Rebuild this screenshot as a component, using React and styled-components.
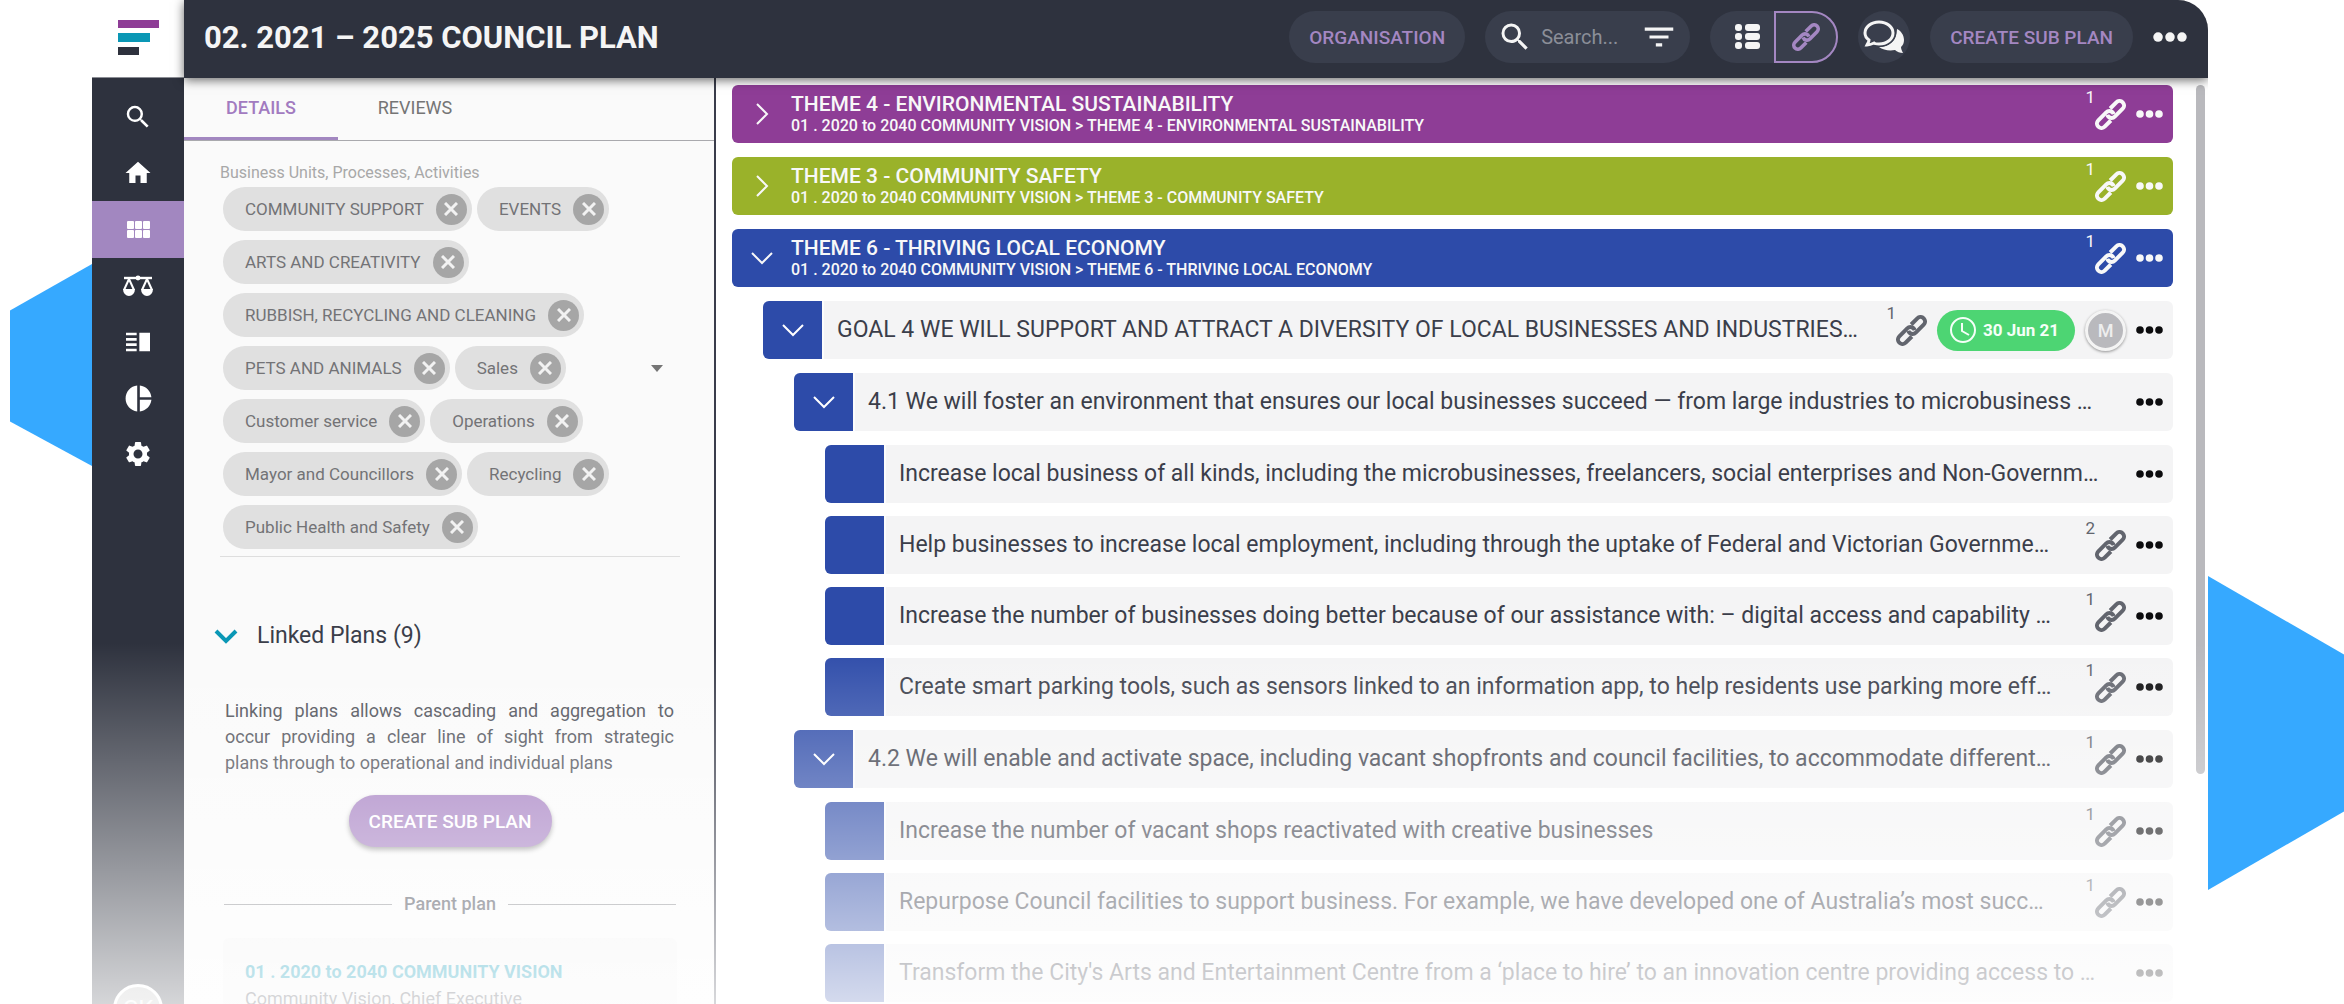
import { useState } from "react";
import styled, { createGlobalStyle, css } from "styled-components";
import {
    MdSearch,
    MdHome,
    MdVerticalSplit,
    MdPieChart,
    MdSettings,
    MdFilterList,
} from "react-icons/md";

const navItems = [
    { label: "Search", icon: <MdSearch size={30} /> },
    { label: "Home", icon: <MdHome size={30} /> },
    { label: "Plans", icon: <GridIcon />, active: true },
    { label: "Balance", icon: <ScalesIcon /> },
    { label: "Reports", icon: <MdVerticalSplit size={32} /> },
    { label: "Analytics", icon: <MdPieChart size={31} /> },
    { label: "Settings", icon: <MdSettings size={30} /> },
];

const businessUnits = [
    "COMMUNITY SUPPORT",
    "EVENTS",
    "ARTS AND CREATIVITY",
    "RUBBISH, RECYCLING AND CLEANING",
    "PETS AND ANIMALS",
    "Sales",
    "Customer service",
    "Operations",
    "Mayor and Councillors",
    "Recycling",
    "Public Health and Safety",
];

const themes = [
    { name: "THEME 4 - ENVIRONMENTAL SUSTAINABILITY", color: "#8e3d96" },
    { name: "THEME 3 - COMMUNITY SAFETY", color: "#9ab22a" },
    { name: "THEME 6 - THRIVING LOCAL ECONOMY", color: "#2d4ba9", open: true },
];

const strategies = [
    {
        name: "4.1 We will foster an environment that ensures our local businesses succeed — from large industries to microbusiness …",
        actions: [
            { name: "Increase local business of all kinds, including the microbusinesses, freelancers, social enterprises and Non-Governm…" },
            { name: "Help businesses to increase local employment, including through the uptake of Federal and Victorian Governme…", links: 2 },
            { name: "Increase the number of businesses doing better because of our assistance with: – digital access and capability …", links: 1 },
            { name: "Create smart parking tools, such as sensors linked to an information app, to help residents use parking more eff…", links: 1 },
        ],
    },
    {
        name: "4.2 We will enable and activate space, including vacant shopfronts and council facilities, to accommodate different…",
        links: 1,
        actions: [
            { name: "Increase the number of vacant shops reactivated with creative businesses", links: 1 },
            { name: "Repurpose Council facilities to support business. For example, we have developed one of Australia’s most succ…", links: 1 },
            { name: "Transform the City's Arts and Entertainment Centre from a ‘place to hire’ to an innovation centre providing access to …" },
        ],
    },
];

function GridIcon() {
    return (
        <svg width="23" height="18" viewBox="0 0 23 18" fill="currentColor">
            {[0, 8, 16].map((x) => (
                <g key={x}>
                    <rect x={x} y="0" width="7" height="8" rx="1" />
                    <rect x={x} y="9" width="7" height="8" rx="1" />
                </g>
            ))}
        </svg>
    );
}

function ScalesIcon() {
    return (
        <svg width="32" height="22" viewBox="0 0 32 22" fill="none" stroke="currentColor" strokeWidth="2">
            <path d="M2 3h28" strokeWidth="2.4" />
            <circle cx="16" cy="3" r="2.4" fill="currentColor" stroke="none" />
            <path d="M7 4L2 15M7 4l5 11M25 4l-5 11M25 4l5 11" />
            <path d="M1 14h12a6 7 0 0 1-12 0zM19 14h12a6 7 0 0 1-12 0z" fill="currentColor" stroke="none" />
        </svg>
    );
}

function ChainIcon({ size = 31 }) {
    const ring = "M-4 4.5H-12.75a4.5 4.5 0 0 1 0-9H-1.5a4.5 4.5 0 0 1 4 6.5";
    return (
        <svg width={size} height={size} viewBox="0 0 31 31" fill="none" stroke="currentColor" strokeWidth="4">
            <g transform="translate(15.5 15.5) rotate(-45)">
                <path d={ring} />
                <path d={ring} transform="rotate(180)" />
            </g>
        </svg>
    );
}

function Chevron({ open, size = 24, width = 2 }) {
    return (
        <svg width={size} height={size} viewBox="0 0 24 24" fill="none" stroke="currentColor" strokeWidth={width}>
            <path d={open ? "M2 7l10 10L22 7" : "M7 2l10 10L7 22"} />
        </svg>
    );
}

function Dots({ width = 27 }) {
    return (
        <svg width={width} viewBox="0 0 27 8" fill="currentColor">
            <circle cx="4" cy="4" r="3.8" />
            <circle cx="13.5" cy="4" r="3.8" />
            <circle cx="23" cy="4" r="3.8" />
        </svg>
    );
}

function ListIcon() {
    return (
        <svg width="26" height="26" viewBox="0 0 26 26" fill="currentColor">
            {[0, 9, 18].map((y) => (
                <g key={y}>
                    <rect x="0" y={y} width="7" height="7" rx="3" />
                    <rect x="10" y={y} width="15" height="7" rx="3" />
                </g>
            ))}
        </svg>
    );
}

function ChatIcon() {
    const bubble =
        "M16 2c8 0 14 5 14 11s-6 11-14 11c-2 0-4 0-5-1-2 1-4 2-7 2 1-2 2-3 2-5-3-2-4-4-4-7C2 7 8 2 16 2z";
    return (
        <svg width="42" height="34" viewBox="0 0 42 34">
            <path
                d="M34 9c4 2 7 6 7 11 0 3-1 5-3 7 0 2 1 4 2 6-3 0-6-1-8-3-6 1-12 0-16-3 10 0 18-6 18-18z"
                fill="currentColor"
            />
            <path d={bubble} fill="none" stroke="#393e4c" strokeWidth="6" />
            <path d={bubble} fill="#393e4c" stroke="currentColor" strokeWidth="3" />
        </svg>
    );
}

function ClockIcon() {
    return (
        <svg width="28" height="28" viewBox="0 0 28 28" fill="none" stroke="currentColor" strokeWidth="2">
            <circle cx="14" cy="14" r="12" />
            <path d="M13 7v8l7 4" />
        </svg>
    );
}

function RowActions({ links, children }) {
    return (
        <Actions>
            {links && (
                <LinkCount type="button" aria-label={`${links} linked plans`}>
                    <span>{links}</span>
                    <ChainIcon />
                </LinkCount>
            )}
            {children}
            <MoreButton type="button" aria-label="More">
                <Dots />
            </MoreButton>
        </Actions>
    );
}

function PlanRow({ name, links, open, children }) {
    return (
        <Row>
            <Tile>{open && <Chevron open />}</Tile>
            <RowText>{name}</RowText>
            <RowActions links={links}>{children}</RowActions>
        </Row>
    );
}

function Header() {
    return (
        <HeaderBar>
            <PlanTitle>02. 2021 – 2025 COUNCIL PLAN</PlanTitle>
            <Pill type="button">ORGANISATION</Pill>
            <SearchBox>
                <MdSearch size={36} />
                <input type="text" placeholder="Search..." aria-label="Search" />
                <MdFilterList size={38} />
            </SearchBox>
            <Toggle>
                <button type="button" aria-label="List view">
                    <ListIcon />
                </button>
                <ToggleActive type="button" aria-label="Link view">
                    <ChainIcon size={28} />
                </ToggleActive>
            </Toggle>
            <ChatButton type="button" aria-label="Comments">
                <ChatIcon />
            </ChatButton>
            <Pill type="button">CREATE SUB PLAN</Pill>
            <MoreButton type="button" aria-label="More">
                <Dots width={34} />
            </MoreButton>
        </HeaderBar>
    );
}

function DetailsPanel({ units, onRemove }) {
    return (
        <Panel>
            <Tabs>
                <Tab type="button" $active>DETAILS</Tab>
                <Tab type="button">REVIEWS</Tab>
            </Tabs>
            <PanelBody>
                <FieldLabel>Business Units, Processes, Activities</FieldLabel>
                <ChipField>
                    <Chips>
                        {units.map((unit) => (
                            <Chip key={unit}>
                                {unit}
                                <RemoveButton type="button" aria-label={`Remove ${unit}`} onClick={() => onRemove(unit)}>
                                    <svg width="14" height="14" viewBox="0 0 14 14" stroke="currentColor" strokeWidth="3">
                                        <path d="M1 1l12 12M13 1L1 13" />
                                    </svg>
                                </RemoveButton>
                            </Chip>
                        ))}
                    </Chips>
                    <Caret />
                </ChipField>
                <SectionTitle>
                    <Chevron open width={4} />
                    Linked Plans (9)
                </SectionTitle>
                <Description>
                    Linking plans allows cascading and aggregation to occur providing a clear line of sight from
                    strategic <span>plans through</span> to operational and individual plans
                </Description>
                <PrimaryButton type="button">CREATE SUB PLAN</PrimaryButton>
                <Divider>Parent plan</Divider>
                <ParentCard>
                    <a href="#parent">01 . 2020 to 2040 COMMUNITY VISION</a>
                    <span>Community Vision, Chief Executive</span>
                </ParentCard>
            </PanelBody>
        </Panel>
    );
}

function App() {
    const [units, setUnits] = useState(businessUnits);

    return (
        <Page>
            <GlobalStyle />
            <LeftShape />
            <Frame>
                <LogoBox>
                    <svg width="42" height="36" viewBox="0 0 42 36">
                        <rect width="41" height="8" fill="#8e3d96" />
                        <rect y="13" width="32" height="9" fill="#0a97b5" />
                        <rect y="27" width="21" height="8" fill="#2e313d" />
                    </svg>
                </LogoBox>
                <Header />
                <Sidebar>
                    {navItems.map((item) => (
                        <NavLink key={item.label} href={`#${item.label}`} aria-label={item.label} $active={item.active}>
                            {item.icon}
                        </NavLink>
                    ))}
                    <Avatar>CK</Avatar>
                </Sidebar>
                <DetailsPanel units={units} onRemove={(unit) => setUnits(units.filter((u) => u !== unit))} />
                <Content>
                    <Tree>
                        {themes.map((theme) => (
                            <ThemeRow key={theme.name} $color={theme.color}>
                                <Chevron open={theme.open} />
                                <ThemeText>
                                    <strong>{theme.name}</strong>
                                    <span>01 . 2020 to 2040 COMMUNITY VISION &gt; {theme.name}</span>
                                </ThemeText>
                                <RowActions links={1} />
                            </ThemeRow>
                        ))}
                        <Branch>
                            <PlanRow
                                name="GOAL 4 WE WILL SUPPORT AND ATTRACT A DIVERSITY OF LOCAL BUSINESSES AND INDUSTRIES…"
                                links={1}
                                open
                            >
                                <DateBadge>
                                    <ClockIcon />
                                    30 Jun 21
                                </DateBadge>
                                <Member>M</Member>
                            </PlanRow>
                            {strategies.map((strategy) => (
                                <Branch key={strategy.name}>
                                    <PlanRow name={strategy.name} links={strategy.links} open />
                                    <Branch $dense>
                                        {strategy.actions.map((action) => (
                                            <PlanRow key={action.name} {...action} />
                                        ))}
                                    </Branch>
                                </Branch>
                            ))}
                        </Branch>
                    </Tree>
                    <ScrollTrack>
                        <ScrollThumb />
                    </ScrollTrack>
                </Content>
                <Fade />
            </Frame>
            <RightShape />
        </Page>
    );
}

export default App;

// Styled components
const GlobalStyle = createGlobalStyle`
    * {
        box-sizing: border-box;
    }

    body {
        margin: 0;
        background: #fff;
        font-family: Roboto, "Liberation Sans", sans-serif;
        color: #3b3e4a;
    }

    button {
        font: inherit;
        border: none;
        padding: 0;
        background: none;
        color: inherit;
        cursor: pointer;
    }

    svg {
        display: block;
        flex-shrink: 0;
    }
`;

const Page = styled.div`
    display: grid;
    grid-template-columns: 92px minmax(0, 1fr) 136px;
    height: 100vh;
    overflow: hidden;
`;

const LeftShape = styled.div`
    height: 202px;
    margin: 264px 0 0 10px;
    background: #36a9ff;
    clip-path: polygon(100% 0, 100% 100%, 0 78%, 0 23%);
`;

const RightShape = styled.div`
    height: 314px;
    margin-top: 576px;
    background: #36a9ff;
    clip-path: polygon(0 0, 100% 25%, 100% 75%, 0 100%);
`;

const Frame = styled.div`
    position: relative;
    display: grid;
    grid-template-columns: 92px 532px minmax(0, 1fr);
    grid-template-rows: 78px minmax(0, 1fr);
    min-height: 0;
    border-radius: 30px 30px 0 0;
    overflow: hidden;
`;

const LogoBox = styled.div`
    display: flex;
    align-items: center;
    padding: 0 0 2px 26px;
    border-bottom: 1px solid #8b8d94;
`;

const HeaderBar = styled.header`
    grid-column: 2 / 4;
    display: flex;
    align-items: center;
    gap: 20px;
    padding: 0 21px 4px 20px;
    background: #2e323e;
    color: #f5f5f5;
    box-shadow: 0 2px 10px rgba(0, 0, 0, 0.6);
    z-index: 1;
`;

const PlanTitle = styled.h1`
    flex: 1;
    margin: 0;
    font-size: 31px;
    font-weight: 700;
`;

const Pill = styled.button`
    height: 52px;
    padding: 0 20px;
    border-radius: 26px;
    background: #393e4c;
    color: #a487c2;
    font-size: 19px;
    font-weight: 500;
`;

const SearchBox = styled.div`
    display: flex;
    align-items: center;
    height: 52px;
    width: 205px;
    padding: 0 12px;
    border-radius: 26px;
    background: #393e4c;

    input {
        flex: 1;
        min-width: 0;
        padding: 0 0 0 8px;
        border: none;
        background: none;
        color: #f5f5f5;
        font: inherit;
        font-size: 20px;
    }

    input::placeholder {
        color: #8b8e98;
    }
`;

const Toggle = styled.div`
    display: flex;
    height: 52px;
    border-radius: 26px;
    background: #393e4c;

    button {
        display: flex;
        align-items: center;
        justify-content: center;
        width: 64px;
        padding-left: 12px;
    }
`;

const ToggleActive = styled.button`
    && {
        padding: 0;
        border: 2px solid #a487c2;
        border-radius: 0 26px 26px 0;
        color: #a487c2;
    }
`;

const ChatButton = styled.button`
    display: flex;
    align-items: center;
    justify-content: center;
    width: 52px;
    height: 52px;
    border-radius: 50%;
    background: #393e4c;
`;

const MoreButton = styled.button`
    display: flex;
    align-items: center;
    height: 40px;
`;

const Sidebar = styled.nav`
    display: flex;
    flex-direction: column;
    align-items: center;
    height: 100%;
    padding-top: 11px;
    background: #2e323e;
    color: #f5f5f5;
`;

const NavLink = styled.a`
    display: flex;
    align-items: center;
    justify-content: center;
    width: 100%;
    height: ${(props) => (props.$active ? "57px" : "56px")};
    flex-shrink: 0;
    background: ${(props) => (props.$active ? "#a287c0" : "transparent")};
    color: #fff;
`;

const Avatar = styled.div`
    display: flex;
    align-items: center;
    justify-content: center;
    flex-shrink: 0;
    width: 50px;
    height: 50px;
    margin-top: auto;
    margin-bottom: -30px;
    border: 3px solid #fff;
    border-radius: 50%;
    background: #bbb;
    font-size: 24px;
`;

const Panel = styled.aside`
    background: #fafafa;
    border-right: 2px solid #3a3d4b;
    overflow: hidden;
`;

const Tabs = styled.div`
    display: flex;
    height: 63px;
    border-bottom: 1px solid #a9a9ad;
`;

const Tab = styled.button`
    width: 154px;
    border-bottom: 3px solid transparent;
    font-size: 18px;
    color: #757575;

    ${(props) =>
        props.$active &&
        css`
            border-bottom-color: #a287c0;
            color: #a27bc0;
            font-weight: 500;
        `}
`;

const PanelBody = styled.div`
    display: flex;
    flex-direction: column;
    padding: 20px 34px 0 36px;
`;

const FieldLabel = styled.div`
    font-size: 16px;
    line-height: 24px;
    color: #a8a8a8;
`;

const ChipField = styled.div`
    display: flex;
    align-items: center;
    padding: 2px 17px 7px 3px;
    border-bottom: 1px solid #dedede;
`;

const Chips = styled.div`
    flex: 1;
    min-width: 0;
    display: flex;
    flex-wrap: wrap;
    gap: 9px 5px;
`;

const Chip = styled.span`
    display: inline-flex;
    align-items: center;
    gap: 12px;
    height: 44px;
    padding: 0 5px 0 22px;
    border-radius: 22px;
    background: #e0e0e0;
    color: #737376;
    font-size: 17px;
    white-space: nowrap;
`;

const RemoveButton = styled.button`
    display: flex;
    align-items: center;
    justify-content: center;
    width: 31px;
    height: 31px;
    border-radius: 50%;
    background: #a6a6a6;
    color: #f2f2f2;
`;

const Caret = styled.div`
    border: 6px solid transparent;
    border-top: 7px solid #757575;
    border-bottom: none;
`;

const SectionTitle = styled.h2`
    display: flex;
    align-items: center;
    gap: 19px;
    margin: 64px 0 0 -6px;
    font-size: 23px;
    font-weight: 400;
    line-height: 30px;

    svg {
        color: #0a97b5;
    }
`;

const Description = styled.p`
    margin: 47px 6px 0 5px;
    font-size: 18px;
    line-height: 26px;
    text-align: justify;
    color: #4c4e56;

    span {
        white-space: nowrap;
    }
`;

const PrimaryButton = styled.button`
    align-self: center;
    width: 203px;
    height: 52px;
    margin-top: 19px;
    border-radius: 26px;
    background: #a27bc0;
    box-shadow: 0 3px 5px rgba(0, 0, 0, 0.4);
    color: #fff;
    font-size: 19px;
    font-weight: 500;
`;

const Divider = styled.div`
    display: flex;
    align-items: center;
    gap: 12px;
    margin: 45px 4px 0;
    font-size: 18px;
    font-weight: 500;
    line-height: 24px;

    &::before,
    &::after {
        content: "";
        flex: 1;
        height: 1px;
        background: #86878c;
    }
`;

const ParentCard = styled.div`
    display: flex;
    flex-direction: column;
    margin: 22px 3px 0;
    padding: 20px 22px;
    background: #f3f3f3;
    border-radius: 6px;
    font-size: 18px;
    line-height: 27px;

    a {
        color: #0a97b5;
        font-weight: 700;
        text-decoration: none;
    }
`;

const Content = styled.main`
    display: flex;
    gap: 23px;
    padding: 7px 3px 0 16px;
    background: #fff;
    overflow: hidden;
`;

const Tree = styled.div`
    flex: 1;
    min-width: 0;
    display: flex;
    flex-direction: column;
    gap: 14px;
`;

const Branch = styled.div`
    display: flex;
    flex-direction: column;
    gap: ${(props) => (props.$dense ? "13px" : "14px")};
    padding-left: 31px;
`;

const ThemeRow = styled.div`
    display: flex;
    align-items: center;
    height: 58px;
    padding: 0 10px 0 18px;
    border-radius: 6px;
    background: ${(props) => props.$color};
    color: #f8f8f8;
`;

const ThemeText = styled.div`
    flex: 1;
    display: flex;
    flex-direction: column;
    padding-left: 17px;
    font-weight: 500;

    strong {
        font-size: 21px;
        font-weight: 500;
        line-height: 24px;
    }

    span {
        font-size: 16px;
        line-height: 20px;
    }
`;

const Row = styled.div`
    display: flex;
    align-items: center;
    height: 58px;
    padding-right: 10px;
    border-radius: 6px;
    background: #f4f4f5;
    overflow: hidden;
`;

const Tile = styled.div`
    display: flex;
    align-items: center;
    justify-content: center;
    flex-shrink: 0;
    width: 61px;
    height: 100%;
    border-right: 2px solid #fcfcfc;
    background: #2d4ba9;
    color: #fff;
`;

const RowText = styled.div`
    flex: 1;
    min-width: 0;
    padding-left: 13px;
    font-size: 23px;
    line-height: 30px;
    white-space: nowrap;
    overflow: hidden;
    text-overflow: ellipsis;
`;

const Actions = styled.div`
    display: flex;
    align-items: center;
    gap: 10px;
    padding-left: 10px;
    color: #0c0c0e;

    ${ThemeRow} & {
        color: #f8f8f8;
    }
`;

const LinkCount = styled.button`
    display: flex;
    align-items: center;
    height: 50px;
    color: #62656e;

    ${ThemeRow} & {
        color: #f8f8f8;
    }

    span {
        align-self: flex-start;
        font-size: 17px;
        font-weight: 400;
        line-height: 17px;
    }
`;

const DateBadge = styled.span`
    display: flex;
    align-items: center;
    gap: 6px;
    height: 41px;
    padding: 0 16px 0 12px;
    border-radius: 21px;
    background: #4dd573;
    color: #f5fff8;
    font-size: 17px;
    font-weight: 700;
    white-space: nowrap;
`;

const Member = styled.span`
    display: flex;
    align-items: center;
    justify-content: center;
    width: 41px;
    height: 41px;
    border: 3px solid #f4f4f4;
    border-radius: 50%;
    background: #b9b9bd;
    box-shadow: 0 1px 3px rgba(0, 0, 0, 0.4);
    color: #eee;
    font-size: 18px;
    font-weight: 500;
`;

const ScrollTrack = styled.div`
    width: 9px;
`;

const ScrollThumb = styled.div`
    height: 75%;
    border-radius: 5px;
    background: #b9b9bd;
`;

const Fade = styled.div`
    position: absolute;
    inset: auto 0 0 0;
    height: 36%;
    background: linear-gradient(rgba(255, 255, 255, 0), rgba(255, 255, 255, 0.8));
    pointer-events: none;
    z-index: 2;
`;
